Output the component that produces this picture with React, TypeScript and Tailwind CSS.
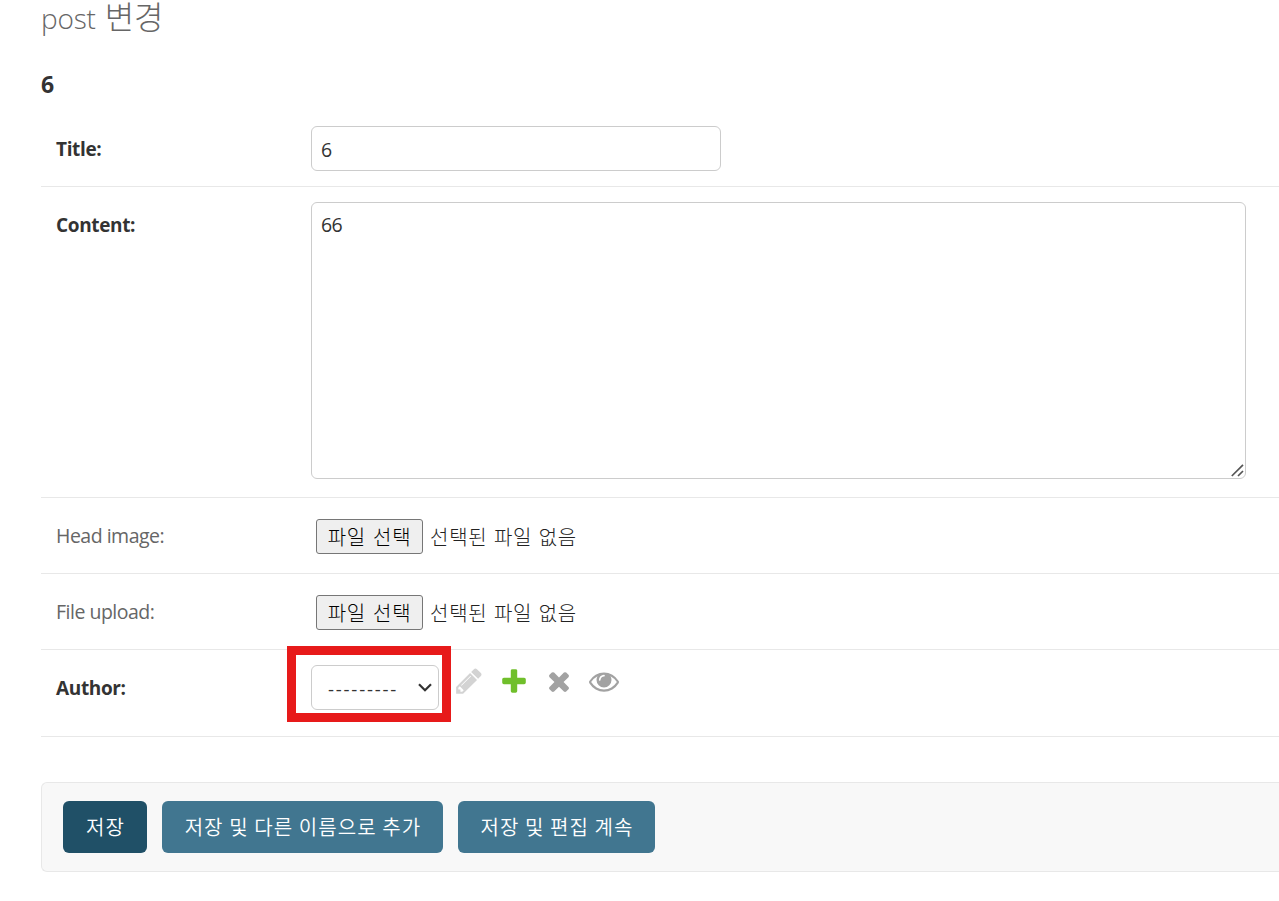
import type { ReactNode } from "react";

const ICONS = {
  pencil:
    "M491 1536l91-91-235-235-91 91v107h128v128h107zm523-928q0-22-22-22-10 0-17 7l-542 542q-7 7-7 17 0 22 22 22 10 0 17-7l542-542q7-7 7-17zm-54-192l416 416-832 832h-416v-416zm683 96q0 53-37 90l-166 166-416-416 166-165q36-38 90-38 53 0 91 38l235 234q37 39 37 91z",
  plus: "M1600 796v192q0 40-28 68t-68 28h-416v416q0 40-28 68t-68 28h-192q-40 0-68-28t-28-68v-416h-416q-40 0-68-28t-28-68v-192q0-40 28-68t68-28h416v-416q0-40 28-68t68-28h192q40 0 68 28t28 68v416h416q40 0 68 28t28 68z",
  times:
    "M1490 1322q0 40-28 68l-136 136q-28 28-68 28t-68-28l-294-294-294 294q-28 28-68 28t-68-28l-136-136q-28-28-28-68t28-68l294-294-294-294q-28-28-28-68t28-68l136-136q28-28 68-28t68 28l294 294 294-294q28-28 68-28t68 28l136 136q28 28 28 68t-28 68l-294 294 294 294q28 28 28 68z",
  eye: "M1664 960q-152-236-381-353 61 104 61 225 0 185-131.5 316.5t-316.5 131.5-316.5-131.5-131.5-316.5q0-121 61-225-229 117-381 353 133 205 333.5 326.5t434.5 121.5 434.5-121.5 333.5-326.5zm-720-384q0-20-14-34t-34-14q-125 0-214.5 89.5t-89.5 214.5q0 20 14 34t34 14 34-14 14-34q0-86 61-147t147-61q20 0 34-14t14-34zm848 384q0 34-20 69-140 230-376.5 368.5t-499.5 138.5-499.5-139-376.5-368q-20-35-20-69t20-69q140-229 376.5-368t499.5-139 499.5 139 376.5 368q20 35 20 69z",
};

function Icon({ name, className }: { name: keyof typeof ICONS; className: string }) {
  return (
    <svg viewBox="0 0 1792 1792" className={`size-[30px] ${className}`} fill="currentColor">
      <path d={ICONS[name]} />
    </svg>
  );
}

function Row({ label, required, className, children }: { label: string; required?: boolean; className: string; children: ReactNode }) {
  return (
    <div className={`flex items-start border-b border-[#e8e8e8] pt-[15px] pl-[15px] ${className}`}>
      <label
        className={`w-[255px] shrink-0 pt-[9px] leading-7 ${
          required ? "text-[19px] font-bold tracking-[-0.35px] text-[#333]" : "text-[19.5px] tracking-[-0.5px] text-[#666]"
        }`}
      >
        {label}
      </label>
      {children}
    </div>
  );
}

function FileField() {
  return (
    <div className="flex items-center pt-[6px] pl-[5px] font-['Noto_Sans_CJK_KR',sans-serif] text-[20px] font-light">
      <button className="h-[35px] w-[107px] rounded-[3px] border border-[#767676] bg-[#efefef] leading-none tracking-[0.8px] whitespace-nowrap text-black [word-spacing:1.7px]">
        파일 선택
      </button>
      <span className="pl-[7px] leading-none tracking-[0.75px] whitespace-nowrap text-[#222] [word-spacing:1.3px]">
        선택된 파일 없음
      </span>
    </div>
  );
}

export default function App() {
  return (
    <main className="h-[901px] bg-white pl-[41px] font-['Open_Sans','Noto_Sans_CJK_KR',sans-serif] text-[#333]">
      <h1 className="flex h-[67px] items-baseline text-[28px] leading-[30px] font-light tracking-[-0.2px] whitespace-nowrap text-[#666]">
        <span>post</span>
        <span className="pl-[9px] font-['Noto_Sans_CJK_KR',sans-serif] text-[32px] leading-[30px]">변경</span>
      </h1>
      <h2 className="h-[44px] text-[23px] leading-[34px] font-bold">6</h2>

      <Row label="Title:" required className="h-[76px]">
        <input
          defaultValue="6"
          className="h-[45px] w-[410px] rounded-md border border-[#ccc] pt-px pl-[9px] text-[19.5px] tracking-[-0.6px] text-[#333] outline-none"
        />
      </Row>
      <Row label="Content:" required className="h-[311px]">
        <div className="relative h-[277px] w-[935px] rounded-md border border-[#ccc]">
          <textarea
            defaultValue="66"
            className="block size-full resize-none pt-2 pl-[9px] text-[19.5px] leading-7 tracking-[-0.6px] text-[#333] outline-none"
          />
          <svg viewBox="0 0 13 13" className="absolute right-px bottom-px size-[13px]" stroke="#555" strokeWidth="1.7" fill="none">
            <path d="M0.8 12L12 0.8M7 12L12 7" />
          </svg>
        </div>
      </Row>
      <Row label="Head image:" className="h-[76px]">
        <FileField />
      </Row>
      <Row label="File upload:" className="h-[76px]">
        <FileField />
      </Row>
      <Row label="Author:" required className="h-[87px]">
        <div className="relative flex h-[45px] w-32 items-center justify-between rounded-md border border-[#ccc] pr-[6px] pl-[16px]">
          <span className="pt-[3px] text-[18.6px] tracking-[1.8px]">---------</span>
          <svg viewBox="0 0 14 9" className="h-[9px] w-[14px]" fill="none" stroke="#333" strokeWidth="2.2">
            <path d="M1 1.2L7 7.2L13 1.2" />
          </svg>
          <div className="pointer-events-none absolute -top-5 -left-[25px] h-[76px] w-[164px] border-[9px] border-[#e71a1a]" />
        </div>
        <div className="flex gap-[15px] pt-px pl-[15px]">
          <Icon name="pencil" className="text-[#d3d3d3]" />
          <Icon name="plus" className="text-[#70bf2b]" />
          <Icon name="times" className="text-[#a2a2a2]" />
          <Icon name="eye" className="text-[#a2a2a2]" />
        </div>
      </Row>

      <div className="mt-[45px] flex h-[90px] items-center gap-[15px] rounded-l-md border border-r-0 border-[#e8e8e8] bg-[#f8f8f8] pl-[21px] font-['Noto_Sans_CJK_KR',sans-serif] text-[20px] leading-none font-[350] tracking-[1.1px] whitespace-nowrap text-white [word-spacing:1.7px]">
        <button className="h-[52px] w-[84px] rounded-md bg-[#205067] pl-px">저장</button>
        <button className="h-[52px] w-[281px] rounded-md bg-[#417690] pl-px">저장 및 다른 이름으로 추가</button>
        <button className="h-[52px] w-[197px] rounded-md bg-[#417690] pl-px">저장 및 편집 계속</button>
      </div>
    </main>
  );
}
